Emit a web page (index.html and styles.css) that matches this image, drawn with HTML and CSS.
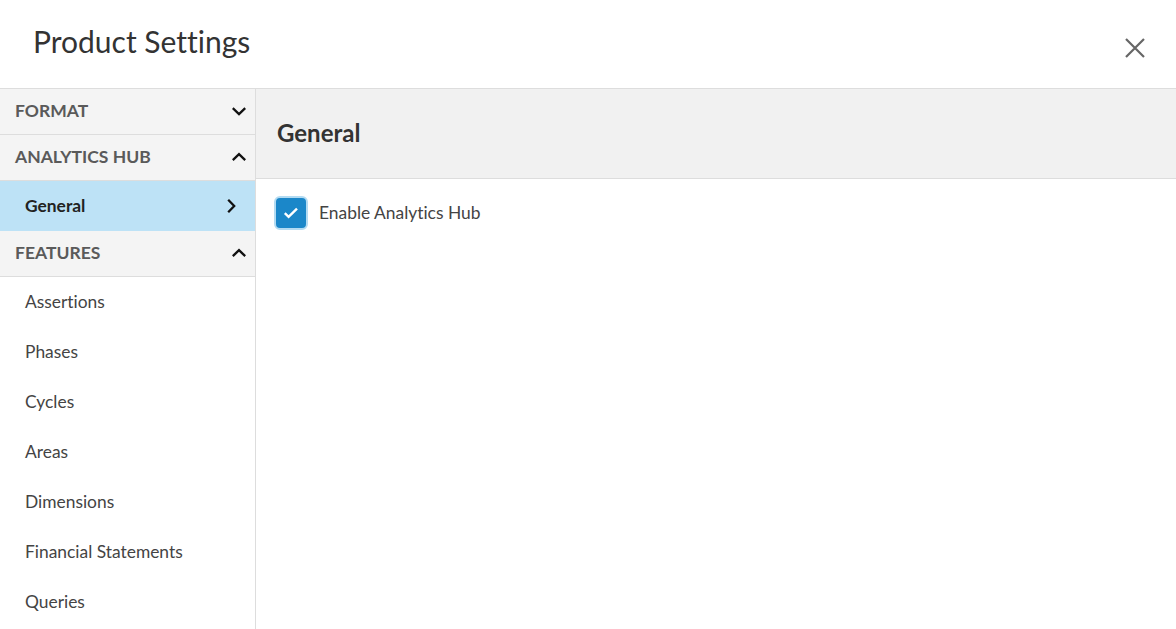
FILE: index.html
```html
<!DOCTYPE html>
<html>
<head>
<meta charset="utf-8">
<link rel="stylesheet" href="styles.css">
</head>
<body>
<div class="dialog">
  <header class="top">
    <h1 class="title">Product Settings</h1>
    <button class="close" aria-label="Close">
      <svg width="22" height="22" viewBox="0 0 22 22"><path d="M2 2L20 20M20 2L2 20" stroke="#666" stroke-width="2.2" fill="none"/></svg>
    </button>
  </header>
  <div class="body">
    <nav class="side">
      <div class="group">
        <span>FORMAT</span>
        <svg class="chev" width="16" height="16" viewBox="0 0 16 16"><path d="M1.8 5.2L8 11.2L14.2 5.2" stroke="#111" stroke-width="2.3" fill="none"/></svg>
      </div>
      <div class="group">
        <span>ANALYTICS HUB</span>
        <svg class="chev" width="16" height="16" viewBox="0 0 16 16"><path d="M1.8 11.2L8 5.2L14.2 11.2" stroke="#111" stroke-width="2.3" fill="none"/></svg>
      </div>
      <div class="item active">
        <span>General</span>
        <svg class="chev" width="16" height="16" viewBox="0 0 16 16"><path d="M5.2 1.8L11.2 8L5.2 14.2" stroke="#111" stroke-width="2.3" fill="none"/></svg>
      </div>
      <div class="group">
        <span>FEATURES</span>
        <svg class="chev" width="16" height="16" viewBox="0 0 16 16"><path d="M1.8 11.2L8 5.2L14.2 11.2" stroke="#111" stroke-width="2.3" fill="none"/></svg>
      </div>
      <div class="item">Assertions</div>
      <div class="item">Phases</div>
      <div class="item">Cycles</div>
      <div class="item">Areas</div>
      <div class="item">Dimensions</div>
      <div class="item">Financial Statements</div>
      <div class="item">Queries</div>
    </nav>
    <main class="content">
      <div class="content-head">General</div>
      <div class="content-body">
        <label class="check">
          <span class="box">
            <svg width="16" height="16" viewBox="0 0 16 16"><path d="M1.8 8.2L5.6 11.8L14 3.6" stroke="#fff" stroke-width="2.4" fill="none"/></svg>
          </span>
          <span>Enable Analytics Hub</span>
        </label>
      </div>
    </main>
  </div>
</div>
</body>
</html>
```

FILE: styles.css
```css
* { box-sizing: border-box; }
html, body { margin: 0; padding: 0; }
body {
  font-family: Lato, "Open Sans", sans-serif;
  font-variant-ligatures: none;
  color: #333;
  background: #fff;
  width: 1176px;
  height: 629px;
  overflow: hidden;
}
.dialog { display: flex; flex-direction: column; height: 629px; }
.top {
  height: 89px;
  flex: none;
  display: flex;
  align-items: flex-start;
  justify-content: space-between;
  border-bottom: 1px solid #ddd;
}
.title {
  margin: 0;
  padding: 23px 0 0 33px;
  font-size: 30px;
  font-weight: 400;
  color: #333;
  line-height: 36px;
}
.close {
  margin: 37px 30px 0 0;
  padding: 0;
  border: 0;
  background: none;
  width: 22px;
  height: 22px;
  display: block;
}
.close svg { display: block; }
.body { flex: 1; display: flex; min-height: 0; }
.side {
  width: 256px;
  flex: none;
  border-right: 1px solid #ddd;
  display: flex;
  flex-direction: column;
}
.group {
  height: 46px;
  flex: none;
  background: #f4f4f4;
  border-bottom: 1px solid #ddd;
  display: flex;
  align-items: center;
  justify-content: space-between;
  padding: 0 8px 2px 15px;
  font-size: 17.5px;
  font-weight: 700;
  color: #5a5a5a;
}
.item {
  height: 50px;
  flex: none;
  display: flex;
  align-items: center;
  justify-content: space-between;
  padding: 0 16px 2px 25px;
  font-size: 17.4px;
  color: #444;
}
.item.active {
  background: #bde2f6;
  font-weight: 700;
  color: #222;
  padding-bottom: 1px;
}
.chev { display: block; }
.content { flex: 1; display: flex; flex-direction: column; }
.content-head {
  height: 90px;
  flex: none;
  background: #f1f1f1;
  border-bottom: 1px solid #ddd;
  display: flex;
  align-items: center;
  padding: 0 0 3px 21px;
  font-size: 24px;
  font-weight: 700;
  color: #333;
}
.content-body { padding: 17px 18px; }
.check {
  display: flex;
  align-items: center;
  gap: 11px;
  font-size: 17.4px;
  color: #444;
}
.check > span:last-child { padding-bottom: 2px; }
.box {
  width: 34px;
  height: 34px;
  border-radius: 6px;
  background: #1b87c9;
  border: 2px solid #b3dbf2;
  display: flex;
  align-items: center;
  justify-content: center;
}
.box svg { display: block; }
```
